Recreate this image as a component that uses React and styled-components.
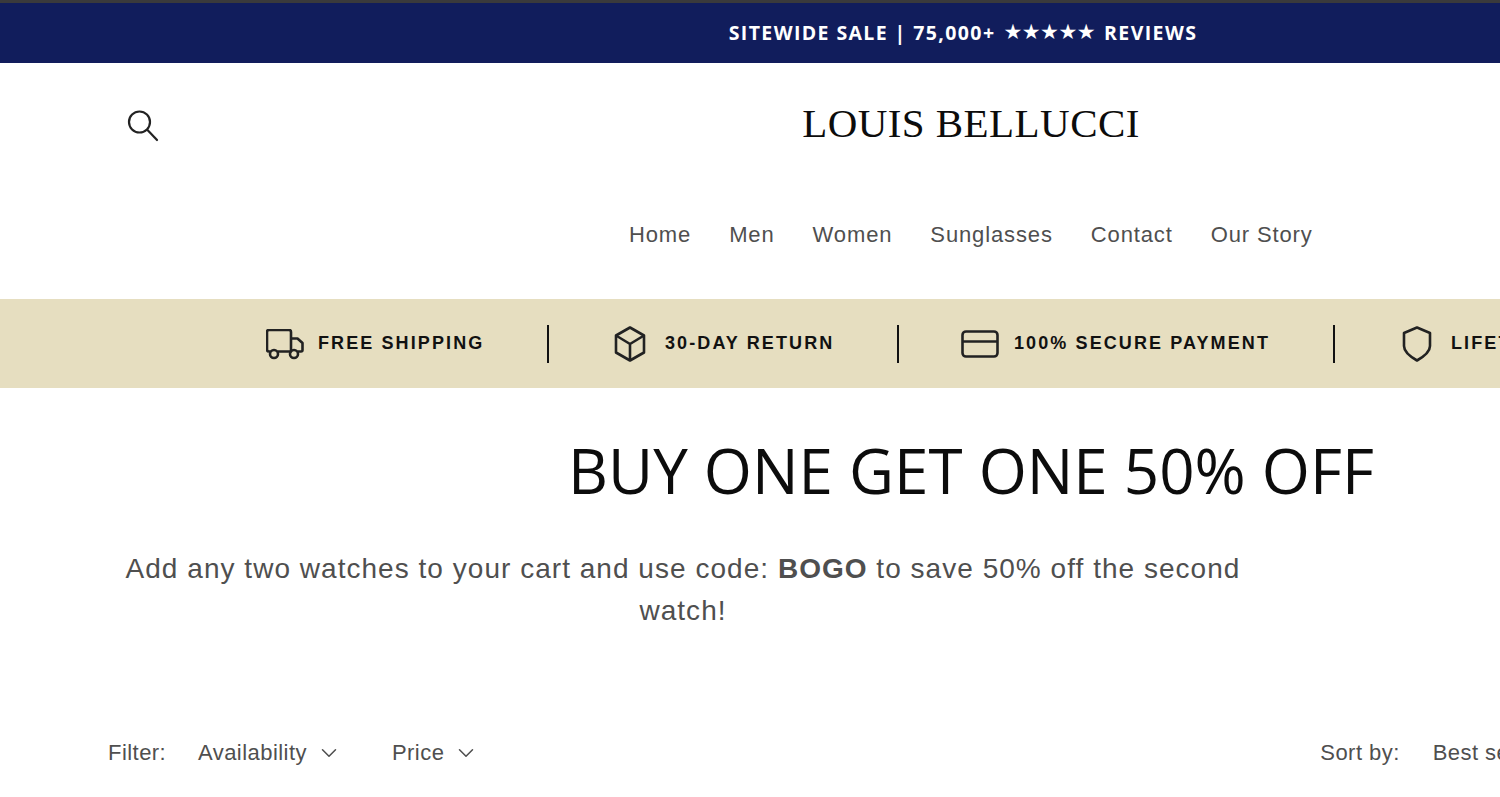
import React from 'react';
import styled, { createGlobalStyle } from 'styled-components';
import { ChevronDown } from 'lucide-react';

const GlobalStyle = createGlobalStyle`
  html, body {
    margin: 0;
    padding: 0;
    background: #fff;
    overflow: hidden;
  }
  body {
    font-family: "Liberation Sans", Arial, sans-serif;
  }
`;

const Page = styled.div`
  width: 1942px;
  height: 797px;
  overflow: hidden;
`;

const AnnouncementBar = styled.div`
  box-sizing: border-box;
  height: 63px;
  padding: 0 16px 2px 0;
  border-top: 3px solid #3a3a3c;
  background: #111d5c;
  display: flex;
  align-items: center;
  justify-content: center;
  color: #fff;
  font-family: "Open Sans", sans-serif;
  font-weight: 700;
  font-size: 19.500px;
  letter-spacing: 1.4px;
  white-space: nowrap;
`;

const Stars = styled.span`
  letter-spacing: -0.5px;
  margin: 0 9px 0 8px;
  font-family: "DejaVu Sans", sans-serif;
  font-size: 21px;
`;

const MastHead = styled.header`
  position: relative;
  height: 121px;
  display: flex;
  align-items: flex-start;
  justify-content: center;
  padding-top: 36px;
  box-sizing: border-box;
`;

const SearchButton = styled.div`
  position: absolute;
  left: 127px;
  top: 47px;
  width: 32px;
  height: 32px;
  color: #222;
`;

const Logo = styled.div`
  font-family: "Liberation Serif", "Times New Roman", serif;
  font-size: 41px;
  line-height: 48px;
  color: #0c0c0c;
  letter-spacing: 0.45px;
  white-space: nowrap;
`;

const Nav = styled.nav`
  height: 115px;
  padding-left: 629px;
  display: flex;
  gap: 38px;
  align-items: flex-start;
`;

const NavLink = styled.a`
  font-size: 22px;
  line-height: 24px;
  margin-top: 39px;
  color: #4f4f4f;
  letter-spacing: 0.87px;
  white-space: nowrap;
`;

const TrustBar = styled.div`
  height: 89px;
  background: #e6dec0;
  display: flex;
  align-items: center;
  padding-left: 266px;
`;

const TrustItem = styled.div`
  display: flex;
  align-items: center;
  gap: ${props => props.$gap || 14}px;
  width: ${props => props.$width}px;
  flex: none;
  color: #111;
`;

const TrustLabel = styled.span`
  font-weight: 700;
  font-size: 18px;
  line-height: 20px;
  margin-top: -2px;
  letter-spacing: 2.1px;
  white-space: nowrap;
`;

const TruckSvg = styled.svg`
  margin-top: 4px;
  flex: none;
`;

const Divider = styled.span`
  width: 2px;
  height: 38px;
  background: #111;
  flex: none;
  margin-right: ${props => props.$after}px;
`;

const Heading = styled.h1`
  margin: 0;
  padding-top: 42px;
  height: 121px;
  box-sizing: border-box;
  text-align: center;
  font-family: "Open Sans", sans-serif;
  font-weight: 400;
  font-size: 61.900px;
  line-height: 80px;
  color: #0c0c0c;
  white-space: nowrap;
`;

const Intro = styled.p`
  margin: 39px 0 0 108px;
  width: 1150px;
  height: 84px;
  text-align: center;
  font-size: 28px;
  line-height: 42px;
  color: #4f4f4f;
  letter-spacing: 1.03px;

  strong {
    font-weight: 700;
  }
`;

const FilterRow = styled.div`
  margin-top: 107px;
  padding: 0 108px;
  display: flex;
  align-items: center;
  font-size: 22px;
  line-height: 28px;
  letter-spacing: 0.45px;
  color: #4f4f4f;
`;

const FilterLabel = styled.span`
  width: 90px;
`;

const FilterButton = styled.span`
  display: flex;
  align-items: center;
  gap: 9px;
  margin-right: ${props => props.$after || 0}px;
`;

const SortBlock = styled.div`
  margin-left: 841px;
  display: flex;
  gap: 33px;
  white-space: nowrap;
`;

function TruckIcon() {
  return (
    <TruckSvg width="38" height="33" viewBox="0 0 38 33" fill="none" stroke="#222" strokeWidth="2.6" strokeLinejoin="round">
      <path d="M4 22.500H3a2 2 0 0 1-2-2V3a2 2 0 0 1 2-2h20a2 2 0 0 1 2 2v19.500H12" />
      <path d="M25 9.500h6.500l5 4.500v7a1.500 1.500 0 0 1-1.500 1.500h-3M24 22.500h0" />
      <circle cx="8" cy="25" r="4" />
      <circle cx="28" cy="25" r="4" />
    </TruckSvg>
  );
}

function BoxIcon() {
  return (
    <svg width="32" height="36" viewBox="0 0 32 36" fill="none" stroke="#222" strokeWidth="2.6" strokeLinejoin="round">
      <path d="M16 1.500 30 9.500v17l-14 8-14-8v-17z" />
      <path d="M2 9.500l14 8.500 14-8.500M16 18v16.500" />
    </svg>
  );
}

function CardIcon() {
  return (
    <svg width="38" height="28" viewBox="0 0 38 28" fill="none" stroke="#222" strokeWidth="2.6" strokeLinejoin="round">
      <rect x="1.500" y="1.500" width="35" height="25" rx="3.500" />
      <path d="M1.500 11.500h35" />
    </svg>
  );
}

function ShieldIcon() {
  return (
    <svg width="30" height="36" viewBox="0 0 30 36" fill="none" stroke="#222" strokeWidth="2.6" strokeLinejoin="round">
      <path d="M15 1.500 28 7v13c0 5-6 10.500-13 14.500C8 30.500 2 25 2 20V7z" />
    </svg>
  );
}

export default function App() {
  return (
    <Page>
      <GlobalStyle />
      <AnnouncementBar>
        SITEWIDE SALE | 75,000+<Stars>★★★★★</Stars>REVIEWS
      </AnnouncementBar>
      <MastHead>
        <SearchButton>
          <svg width="32" height="32" viewBox="0 0 32 32" fill="none" stroke="#222" strokeWidth="2.2" strokeLinecap="round">
            <circle cx="12.500" cy="12" r="10.500" />
            <path d="M20.500 20 30 30" />
          </svg>
        </SearchButton>
        <Logo>LOUIS BELLUCCI</Logo>
      </MastHead>
      <Nav>
        <NavLink>Home</NavLink>
        <NavLink>Men</NavLink>
        <NavLink>Women</NavLink>
        <NavLink>Sunglasses</NavLink>
        <NavLink>Contact</NavLink>
        <NavLink>Our Story</NavLink>
      </Nav>
      <TrustBar>
        <TrustItem $width={281}>
          <TruckIcon />
          <TrustLabel>FREE SHIPPING</TrustLabel>
        </TrustItem>
        <Divider $after={65} />
        <TrustItem $width={283} $gap={19}>
          <BoxIcon />
          <TrustLabel>30-DAY RETURN</TrustLabel>
        </TrustItem>
        <Divider $after={62} />
        <TrustItem $width={372} $gap={15}>
          <CardIcon />
          <TrustLabel>100% SECURE PAYMENT</TrustLabel>
        </TrustItem>
        <Divider $after={67} />
        <TrustItem $width={300} $gap={19}>
          <ShieldIcon />
          <TrustLabel>LIFETIME WARRANTY</TrustLabel>
        </TrustItem>
      </TrustBar>
      <Heading>BUY ONE GET ONE 50% OFF</Heading>
      <Intro>
        Add any two watches to your cart and use code: <strong>BOGO</strong> to save 50% off the second watch!
      </Intro>
      <FilterRow>
        <FilterLabel>Filter:</FilterLabel>
        <FilterButton $after={50}>
          Availability <ChevronDown size={26} strokeWidth={1.4} />
        </FilterButton>
        <FilterButton>
          Price <ChevronDown size={26} strokeWidth={1.4} />
        </FilterButton>
        <SortBlock>
          <span>Sort by:</span>
          <span>Best selling</span>
        </SortBlock>
      </FilterRow>
    </Page>
  );
}
